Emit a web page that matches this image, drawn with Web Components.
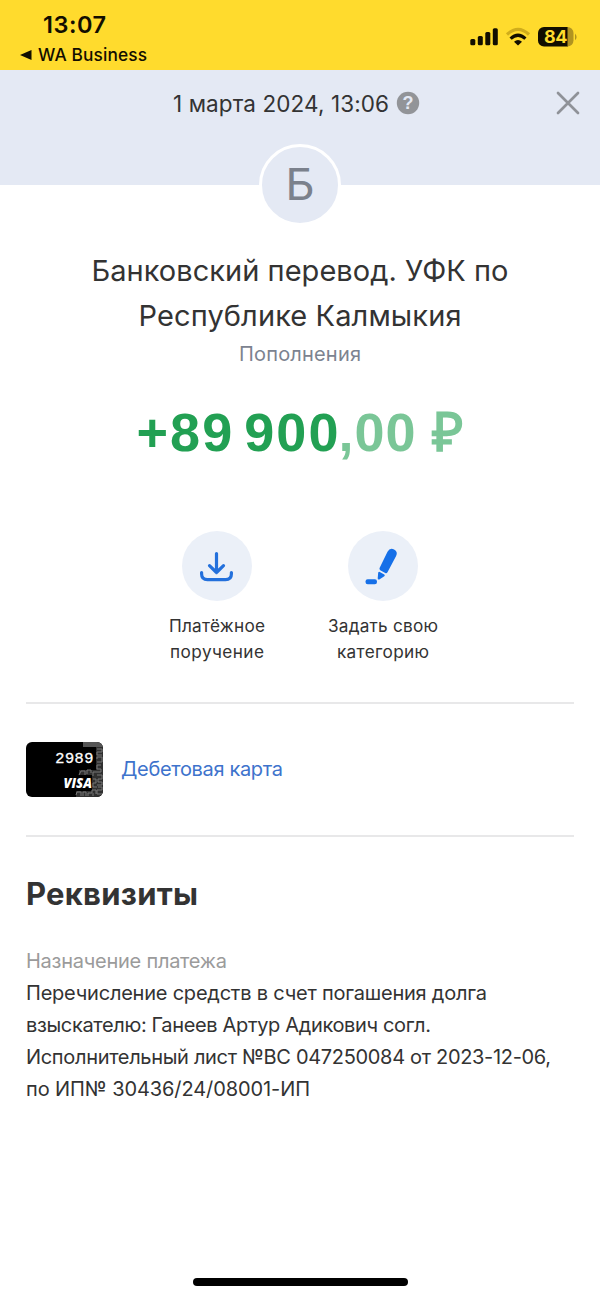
<!DOCTYPE html>
<html lang="ru">
<head>
<meta charset="utf-8">
<title>Операция</title>
<style>
html,body{margin:0;padding:0;background:#fff}
body{font-family:Inter,"Liberation Sans",Arial,sans-serif;color:#333}
</style>
</head>
<body>
<operation-screen></operation-screen>
<script>
function define(name, html, setup){
  const t=document.createElement('template');
  t.innerHTML=html;
  customElements.define(name,class extends HTMLElement{
    connectedCallback(){
      if(this.shadowRoot)return;
      this.attachShadow({mode:'open'}).appendChild(t.content.cloneNode(true));
      if(setup)setup(this,this.shadowRoot);
    }
  });
}

/* One line of text, tracked so that it takes up the given width. */
define('text-line',`<style>
:host{display:block;white-space:nowrap}
span{display:inline-block}
</style><span><slot></slot></span>`,(el,root)=>{
  const s=root.querySelector('span'), n=el.textContent.length, w=+el.getAttribute('width');
  const track=(w-s.getBoundingClientRect().width)/(n-1);
  s.style.letterSpacing=track+'px';
  s.style.marginRight=-track+'px';
});

define('status-bar',`<style>
:host{display:flex;justify-content:space-between;height:70px;box-sizing:border-box;background:#ffdb2d;color:#120e00;font-family:Inter,sans-serif;padding:11px 23px 0 20px}
.time{font-size:23.500px;font-weight:600;line-height:28px;padding-left:23px}
.back{display:flex;align-items:center;gap:6px;font-size:17.3px;font-weight:500;line-height:22px;padding-top:5px}
.right{padding-top:15px}
svg{display:block}
.n{font:700 18px Inter,sans-serif}
</style>
<div>
<text-line class="time" width="63">13:07</text-line>
<div class="back"><svg width="12" height="10"><path d="M0 5L11.5 0V10Z" fill="#120e00"/></svg><text-line width="109">WA Business</text-line></div>
</div>
<div class="right"><svg width="107" height="22" viewBox="470 26 107 22">
<g fill="#120e00"><rect x="470.3" y="39" width="5" height="6.3" rx="1.5"/><rect x="477.8" y="36" width="5" height="9.3" rx="1.5"/><rect x="485.3" y="32" width="5" height="13.3" rx="1.5"/><rect x="492.8" y="28.3" width="5" height="17" rx="1.5"/></g>
<g fill="none" stroke-width="3.2"><path d="M507 34.5Q518 24.2 529 34.5" stroke="#d0ad1b"/><path d="M510.6 38.7Q518 31.8 525.4 38.7" stroke="#120e00"/></g><path d="M514 41.7Q518 38.4 522 41.7L518 45.6Z" fill="#120e00"/>
<path d="M544 27h24v19.5h-24a6 6 0 0 1-6-6V33a6 6 0 0 1 6-6Z" fill="#120e00"/><path d="M567.5 27a6 6 0 0 1 6 6v7.500a6 6 0 0 1-6 6Z" fill="#b09321"/><path d="M575 33.500q3.200 3.400 0 6.800Z" fill="#b09321"/>
<text class="n" x="544" y="43.300" textLength="23.500" fill="#ffdb2d">84</text></svg></div>`);

define('operation-header',`<style>
:host{display:block;position:relative;height:115px;background:#e4e9f4}
.row{display:flex;align-items:center;height:32px;padding:17px 20px 0 173px}
.date{font-size:22.500px;line-height:32px;padding-top:1px}
.help{margin-left:7px}
.close{margin-left:auto}
svg{display:block}
.avatar{position:absolute;left:259px;top:74px;width:76px;height:76px;border:3px solid #fff;border-radius:50%;background:#e4e9f4;display:flex;align-items:center;justify-content:center;font:400 45px/76px Roboto,sans-serif;color:#7b818c}
.q{font:700 18px "Liberation Sans",sans-serif}
</style>
<div class="row"><text-line class="date" width="216">1 марта 2024, 13:06</text-line>
<svg class="help" width="24" height="24"><circle cx="12" cy="12" r="11.200" fill="#929498"/><text class="q" x="12" y="18.300" text-anchor="middle" fill="#e4e9f4">?</text></svg>
<svg class="close" width="24" height="24"><path d="M2 2L22 22M22 2L2 22" stroke="#8f9298" stroke-width="2.700" stroke-linecap="round"/></svg></div>
<div class="avatar">Б</div>`);

define('operation-summary',`<style>
:host{display:flex;flex-direction:column;align-items:center;padding-top:64px}
.title{font-size:29px;line-height:44.600px}
.sub{font-size:20px;line-height:26px;color:#7c8390;margin-top:3px}
.sum{display:flex;align-items:baseline;font:700 54px/64px "Liberation Sans",Arial,sans-serif;color:#22a053;margin-top:33px;height:64px}
.sum .major{word-spacing:-7px}
.minor{color:#7ac697}
</style>
<text-line class="title" width="417">Банковский перевод. УФК по</text-line>
<text-line class="title" width="323">Республике Калмыкия</text-line>
<text-line class="sub" width="122">Пополнения</text-line>
<div class="sum"><text-line class="major" width="202">+89 900</text-line><text-line class="minor" width="125">,00 ₽</text-line></div>`);

define('action-button',`<style>
:host{display:flex;flex-direction:column;align-items:center;width:166px;font:400 17.200px/25.600px Inter,sans-serif}
.circle{width:70px;height:70px;border-radius:50%;background:#ebf0f8;display:flex;margin-bottom:12px}
</style><div class="circle"><slot name="icon"></slot></div><slot></slot>`);

define('action-list',`<style>
:host{display:flex;justify-content:center;padding-top:67px;height:105px;padding-bottom:66px}
svg{display:block}
</style>
<action-button><svg slot="icon" width="70" height="70" fill="none" stroke="#2370dc" stroke-width="3.200" stroke-linecap="round" stroke-linejoin="round"><path d="M34.500 22.500V41.500M27.500 34.600L34.500 41.500L41.500 34.600M19.600 41.500V43Q19.600 48.700 25.500 48.700H43.500Q49.400 48.700 49.400 43V41.500"/></svg>
<text-line width="96">Платёжное</text-line><text-line width="94">поручение</text-line></action-button>
<action-button><svg slot="icon" width="70" height="70" fill="#1670e8"><path d="M39.500 20.700Q41.900 16.500 46.100 18.500Q50.200 20.800 48.100 25L39.500 41.300Q38.700 42.700 37.200 42L32.200 39.200Q30.900 38.300 31.700 36.800Z"/><path d="M30.200 41.500Q31 40.400 32.200 41.200L36.300 43.500Q37.400 44.400 36.300 45.200L31.300 48.400Q29.700 49 29.700 47.200Z"/><rect x="17.500" y="48.200" width="11.500" height="5" rx="2.200"/></svg>
<text-line width="110">Задать свою</text-line><text-line width="92">категорию</text-line></action-button>`);

define('bank-card',`<style>:host{display:block}svg{display:block}
.num{font:500 15.500px "Liberation Sans",sans-serif}.visa{font:italic 800 14px "Open Sans",sans-serif}</style>
<svg width="77" height="55"><defs><clipPath id="c"><rect width="77" height="55" rx="6"/></clipPath></defs>
<g clip-path="url(#c)"><rect width="77" height="55" fill="#000"/>
<path d="M57 0H77V5H57Z" fill="#555"/><path d="M70 5H77V55H50V49H66V33H53V28H70Z" fill="#303030"/>
<g fill="none" stroke="#777" stroke-width="1"><path d="M71 7h5v3h-5v3h5M71 17v-2h5v5h-5M75 23h-4v4h4v3h-5M71 33h5v4h-4v3h4v3h-5M72 45h4v3h-5v4h5M67 37h3v4h-3v4h4"/><path d="M53 33l2-4h4v4M61 32v-4h4v3M67 34v-4h3M50 53l1-3h4v4M57 54v-4h3v4M62 54v-3h4v-3h4v4M67 54v-3"/></g></g>
<text class="num" x="29.500" y="21.300" textLength="37.500" fill="#fff" stroke="#fff" stroke-width=".3">2989</text>
<text class="visa" x="37.500" y="46" textLength="28.500" lengthAdjust="spacingAndGlyphs" fill="#fff">VISA</text></svg>`);

define('card-row',`<style>
:host{display:flex;align-items:center;gap:18px;margin:0 26px;height:131px;border-top:2px solid #e8e8e9;border-bottom:2px solid #e8e8e9;font-size:20px;line-height:26px;color:#3e73cc}
text-line{padding-bottom:2px}
</style><bank-card></bank-card><text-line width="162">Дебетовая карта</text-line>`);

define('operation-details',`<style>
:host{display:block;padding:36px 26px 0 26px;font-size:20px;line-height:32px}
.h{font-size:31px;font-weight:700;line-height:42px;margin-bottom:30px}
.l{color:#9b9b9b}
</style>
<text-line class="h" width="172">Реквизиты</text-line>
<text-line class="l" width="201">Назначение платежа</text-line>
<text-line width="461">Перечисление средств в счет погашения долга</text-line>
<text-line width="405">взыскателю: Ганеев Артур Адикович согл.</text-line>
<text-line width="525">Исполнительный лист №ВС 047250084 от 2023-12-06,</text-line>
<text-line width="284">по ИП№ 30436/24/08001-ИП</text-line>`);

define('home-indicator',`<style>:host{display:block;width:215px;height:8px;border-radius:4px;background:#000;margin:auto auto 12px}</style>`);

define('operation-screen',`<style>:host{display:flex;flex-direction:column;width:600px;height:1298px;overflow:hidden;background:#fff}</style>
<status-bar></status-bar><operation-header></operation-header><operation-summary></operation-summary><action-list></action-list><card-row></card-row><operation-details></operation-details><home-indicator></home-indicator>`);
</script>
</body>
</html>
